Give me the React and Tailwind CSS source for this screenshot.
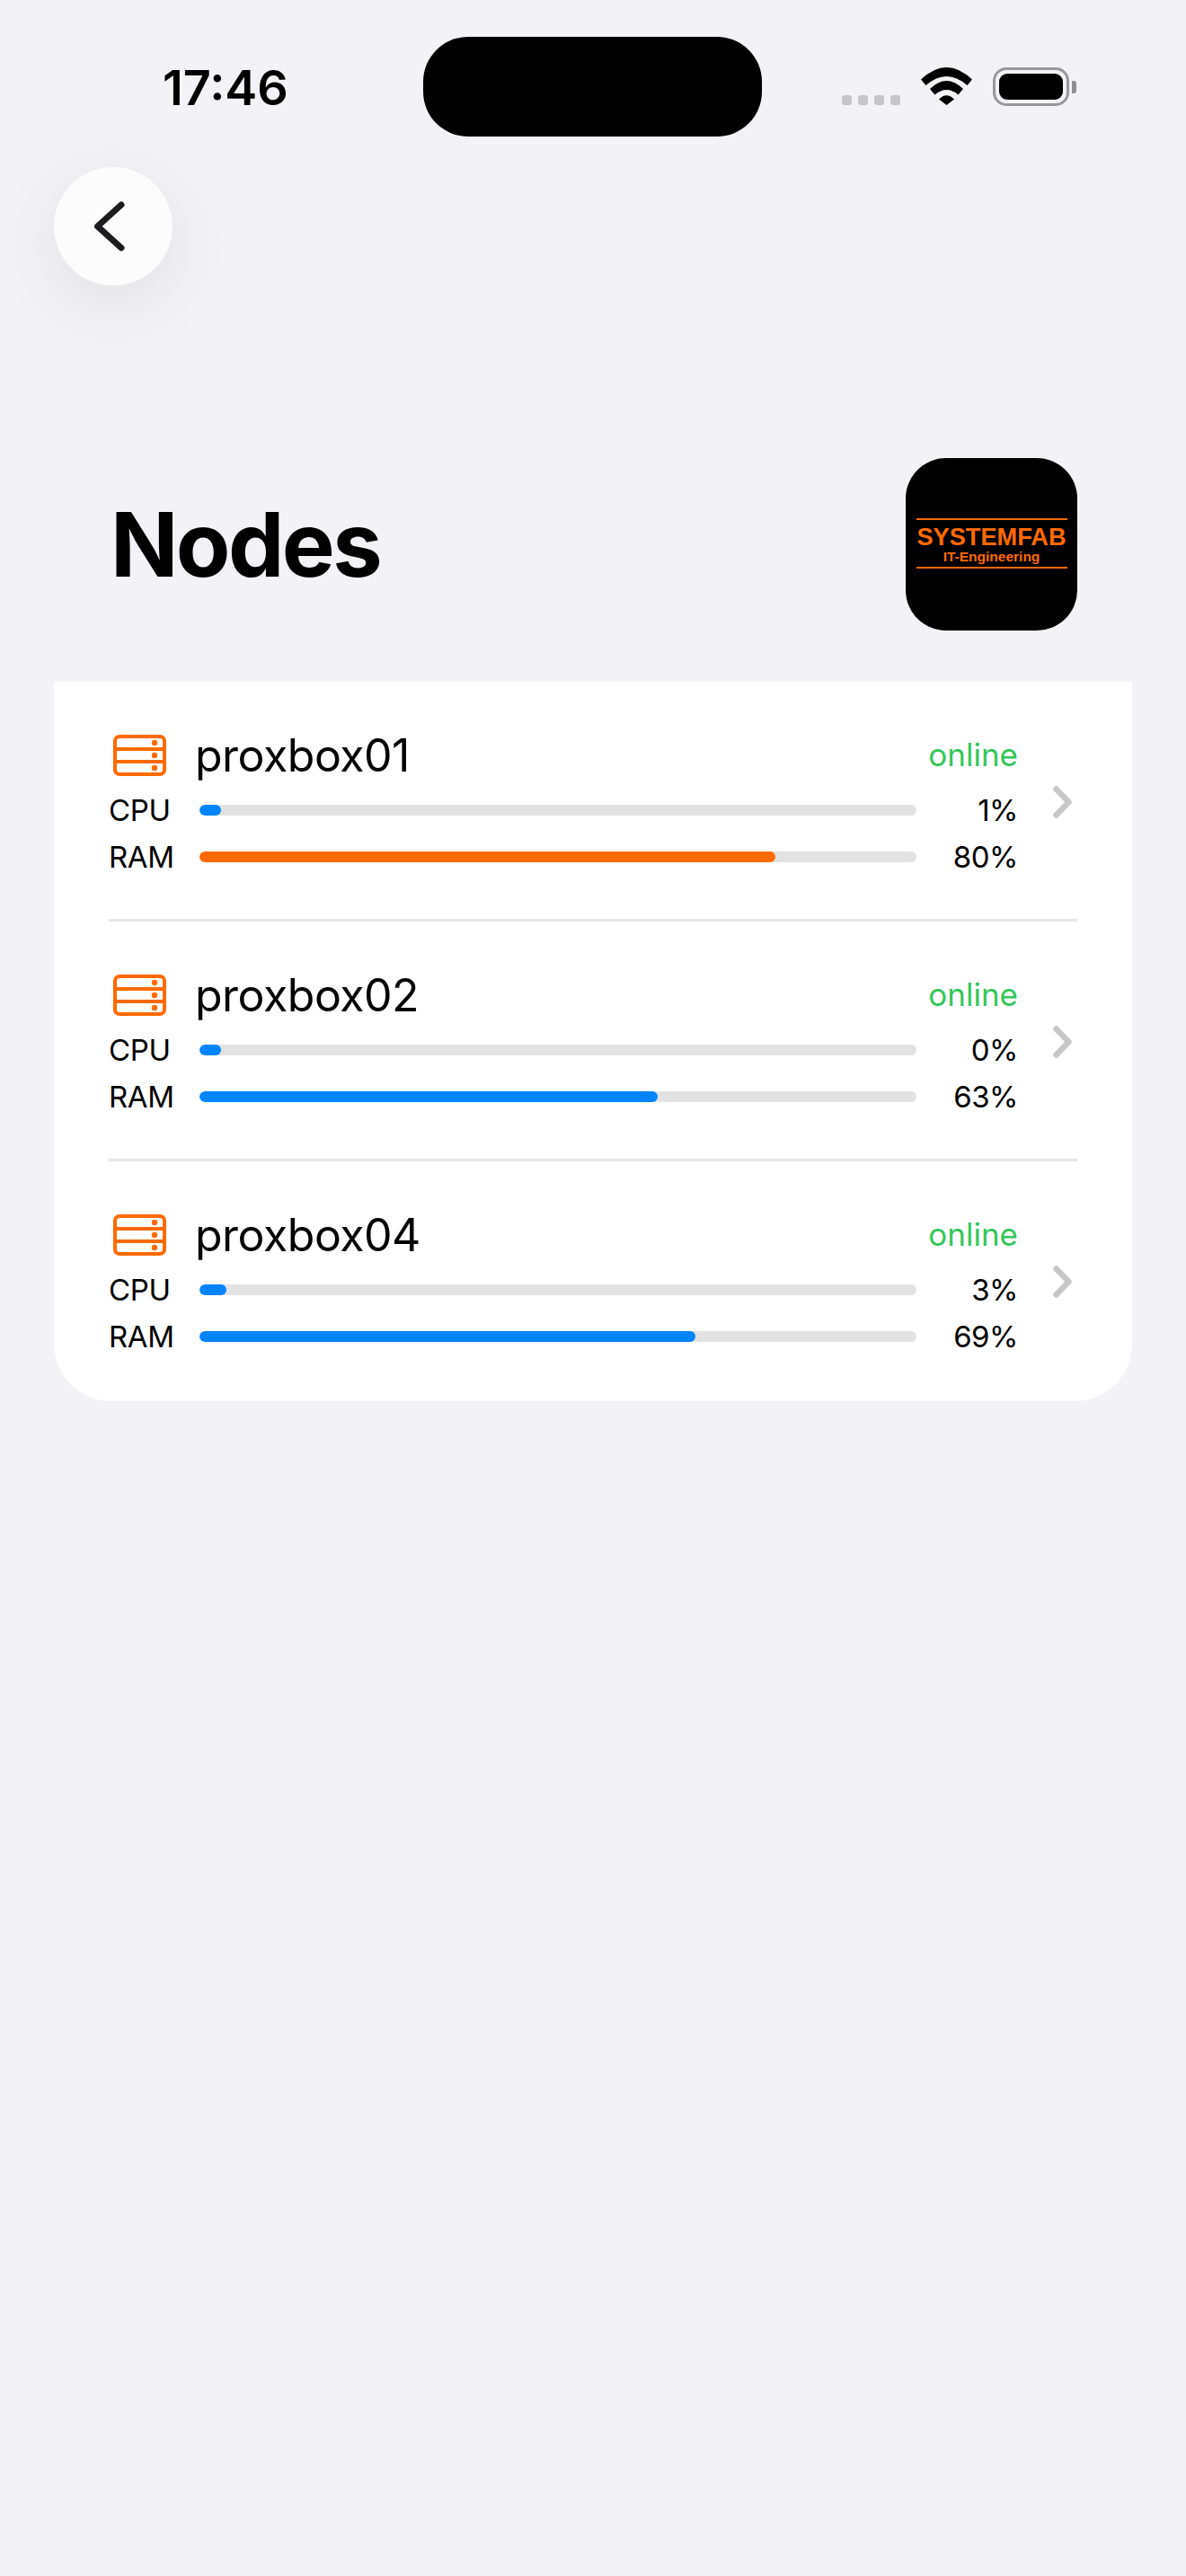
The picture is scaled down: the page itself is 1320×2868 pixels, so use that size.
const FONT = "font-['Inter','Liberation_Sans',sans-serif]";

const nodes = [
  { name: 'proxbox01', cpu: 1, ram: 80, cpuW: 24, ramW: 641, ramColor: 'bg-[#ff6a00]' },
  { name: 'proxbox02', cpu: 0, ram: 63, cpuW: 24, ramW: 510, ramColor: 'bg-[#0084ff]' },
  { name: 'proxbox04', cpu: 3, ram: 69, cpuW: 30, ramW: 552, ramColor: 'bg-[#0084ff]' },
];

function ServerIcon() {
  return (
    <svg width="59" height="46" viewBox="0 0 59 46" fill="none" className="shrink-0">
      <rect x="2" y="2" width="55" height="42" rx="5" stroke="#ff6a00" strokeWidth="4" />
      <path d="M2 16h55M2 30h55" stroke="#ff6a00" strokeWidth="4" />
      <circle cx="46" cy="9" r="3.2" fill="#ff6a00" />
      <circle cx="46" cy="23" r="3.2" fill="#ff6a00" />
      <circle cx="46" cy="37" r="3.2" fill="#ff6a00" />
    </svg>
  );
}

function Wifi() {
  return (
    <svg width="57" height="42" viewBox="0 0 57 42" fill="#000">
      <path d="M0 13.5Q28.5 -13.5 57 13.5L51.5 20Q28.5 0 5.5 20Z" />
      <path d="M10 24Q28.5 6 47 24L41.5 30.5Q28.5 19.5 15.5 30.5Z" />
      <path d="M20 35.5Q28.5 27 37 35.5L28.5 42Z" />
    </svg>
  );
}

function Battery() {
  return (
    <div className="flex items-center">
      <div className="w-[85px] h-[43px] rounded-[15px] border-[3px] border-[#98989b] p-[4px]">
        <div className="w-full h-full rounded-[9px] bg-black" />
      </div>
      <div className="ml-[3px] w-[5px] h-[14px] rounded-r-[3px] bg-[#8e8e93]" />
    </div>
  );
}

function StatusBar() {
  return (
    <div className="h-[186px] shrink-0">
      <div className="flex items-start pl-[181px] pt-[41px]">
        <div className="w-[290px] pt-[27px] text-[54px] leading-[60px] font-semibold text-black">17:46</div>
        <div className="w-[377px] h-[111px] rounded-[50px] bg-black" />
        <div className="ml-[89px] mt-[65px] flex gap-[7px]">
          <div className="w-[11px] h-[11px] rounded-[3px] bg-[#c5c5ca]" />
          <div className="w-[11px] h-[11px] rounded-[3px] bg-[#c5c5ca]" />
          <div className="w-[11px] h-[11px] rounded-[3px] bg-[#c5c5ca]" />
          <div className="w-[11px] h-[11px] rounded-[3px] bg-[#c5c5ca]" />
        </div>
        <div className="ml-[23px] mt-[34px]"><Wifi /></div>
        <div className="ml-[23px] mt-[34px]"><Battery /></div>
      </div>
    </div>
  );
}

function Bar({ label, value, width, color }) {
  return (
    <div className="flex items-center h-[52px]">
      <span className="w-[101px] text-[33px] leading-[52px] tracking-[-0.4px] text-black">{label}</span>
      <div className="w-[798px] h-[12px] rounded-[6px] bg-[#e2e2e2] overflow-hidden">
        <div className={`h-full rounded-[6px] ${color}`} style={{ width }} />
      </div>
      <span className="flex-1 text-right text-[33px] leading-[52px] tracking-[-0.5px] text-black">{value}%</span>
    </div>
  );
}

function NodeRow({ node, last }) {
  return (
    <div className={`mx-[61px] ${last ? '' : 'border-b-[3px] border-[#e6e6e7]'}`}>
      <div className={`flex items-start pt-[52px] ${last ? 'h-[267px]' : 'h-[264px]'}`}>
        <div className="w-[1012px]">
          <div className="flex items-center h-[60px] pl-[5px]">
            <ServerIcon />
            <span className="ml-[32px] flex-1 text-[50px] leading-[60px] tracking-[-0.5px] text-black">{node.name}</span>
            <span className="text-[35px] leading-[58px] self-start text-[#34c759]">online</span>
          </div>
          <div className="mt-[5px]">
            <Bar label="CPU" value={node.cpu} width={node.cpuW} color="bg-[#0084ff]" />
            <Bar label="RAM" value={node.ram} width={node.ramW} color={node.ramColor} />
          </div>
        </div>
        <svg width="21" height="36" viewBox="0 0 21 36" fill="none" className="ml-[39px] mt-[64px] shrink-0">
          <path d="M3.5 3.5L17.5 18L3.5 32.5" stroke="#c7c7c9" strokeWidth="6.5" strokeLinecap="round" strokeLinejoin="round" />
        </svg>
      </div>
    </div>
  );
}

export default function App() {
  return (
    <div className={`w-[1320px] h-[2868px] overflow-hidden bg-[#f2f2f7] ${FONT} flex flex-col`}>
      <StatusBar />
      <div className="pl-[60px]">
        <button className="flex items-center justify-center w-[132px] h-[132px] rounded-full bg-[#fcfcfd] shadow-[0_20px_80px_rgba(0,0,0,0.08)]">
          <svg width="36" height="58" viewBox="0 0 36 58" fill="none" className="-ml-[6px]">
            <path d="M30 5L3.5 29L30 53" stroke="#1c1c1e" strokeWidth="7" strokeLinecap="round" strokeLinejoin="round" />
          </svg>
        </button>
      </div>
      <div className="flex items-center justify-between mt-[192px] px-[121px]">
        <h1 className="ml-[2px] text-[99px] leading-[192px] font-bold text-black tracking-[-2.6px]">Nodes</h1>
        <div className="w-[191px] h-[192px] rounded-[45px] bg-black flex flex-col items-center justify-center font-['Liberation_Sans',sans-serif] font-bold text-[#ff6a00]">
          <div className="w-[168px] h-[2px] bg-[#ff6a00] -mt-[2px]" />
          <div className="text-[27.2px] leading-[28px] mt-[5px] whitespace-nowrap">SYSTEMFAB</div>
          <div className="text-[15.5px] leading-[15px] whitespace-nowrap">IT-Engineering</div>
          <div className="w-[168px] h-[2px] bg-[#ff6a00] mt-[4px]" />
        </div>
      </div>
      <div className="mt-[57px] mx-[60px] bg-white rounded-b-[64px] flex flex-col">
        {nodes.map((n, i) => (
          <NodeRow key={n.name} node={n} last={i === nodes.length - 1} />
        ))}
      </div>
    </div>
  );
}
